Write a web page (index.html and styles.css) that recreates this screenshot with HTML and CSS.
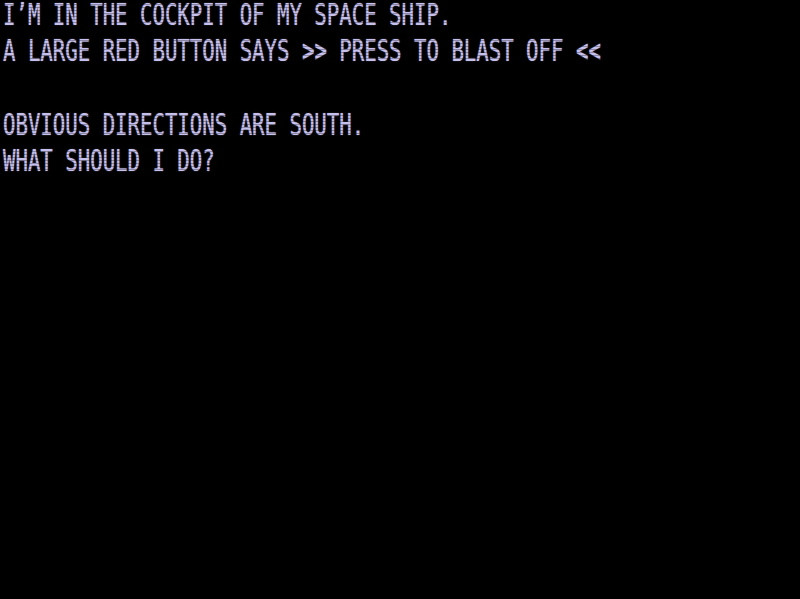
FILE: index.html
```html
<!DOCTYPE html>
<html>
<head>
<meta charset="utf-8">
<link rel="stylesheet" href="styles.css">
</head>
<body>
<div class="crt">
  <div class="screen">
    <div class="line">I’M IN THE COCKPIT OF MY SPACE SHIP.</div>
    <div class="line">A LARGE RED BUTTON SAYS <span class="chev">&gt;&gt;</span> PRESS TO BLAST OFF <span class="chev">&lt;&lt;</span></div>
    <div class="line"></div>
    <div class="line">OBVIOUS DIRECTIONS ARE SOUTH.</div>
    <div class="line">WHAT SHOULD I DO?</div>
  </div>
  <div class="scanlines"></div>
</div>
</body>
</html>
```
FILE: styles.css
```css
html, body {
  margin: 0;
  padding: 0;
  background: #000;
  width: 800px;
  height: 599px;
  overflow: hidden;
}
.crt {
  position: relative;
  width: 800px;
  height: 599px;
  background: #000;
}
.screen {
  margin-top: -4px;
  padding: 0 0 0 3px;
  transform: scaleY(1.45);
  transform-origin: 0 -3px;
  font-family: "DejaVu Sans Mono", "Liberation Mono", monospace;
  font-size: 20.7px;
  line-height: 25.2px;
  color: #c6c0ec;
  text-shadow: 0 0 1px rgba(198, 192, 236, 0.7);
}
.line {
  height: 25.2px;
  white-space: pre;
}
.chev {
  font-weight: bold;
}
.scanlines {
  position: absolute;
  inset: 0;
  background: repeating-linear-gradient(to bottom, rgba(0,0,0,0) 0, rgba(0,0,0,0) 2px, rgba(0,0,0,0.3) 2px, rgba(0,0,0,0.3) 3px);
  pointer-events: none;
}
```
